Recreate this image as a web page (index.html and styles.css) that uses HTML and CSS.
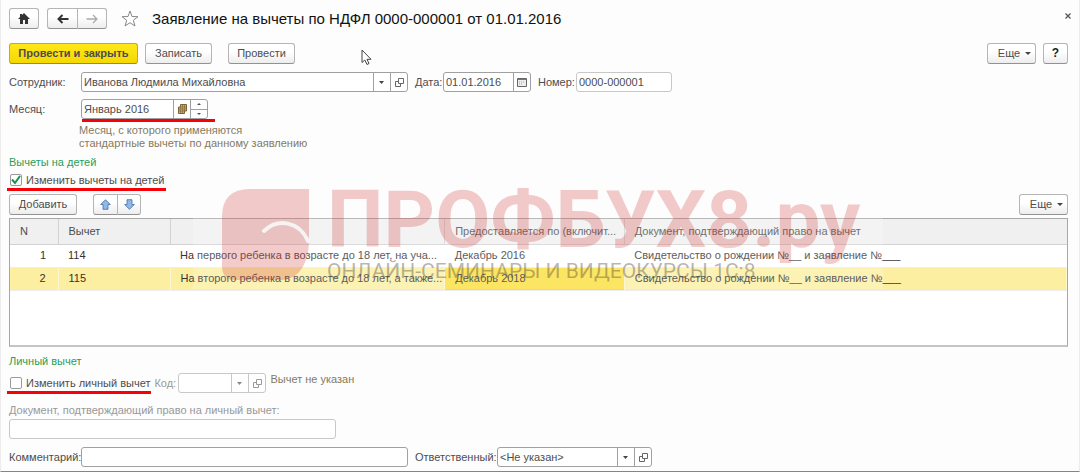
FILE: index.html
```html
<!DOCTYPE html>
<html lang="ru">
<head>
  <meta charset="UTF-8">
  <meta name="viewport" content="width=device-width, initial-scale=1.0">
  <title>Заявление на вычеты по НДФЛ</title>
  <link rel="stylesheet" href="styles.css">
</head>
<body>
  <main class="page">
    <!-- Заголовок окна -->
    <header class="header">
      <button class="btn btn-home" type="button" aria-label="Домой">
        <svg width="12" height="11" viewBox="0 0 12 11"><path d="M6 0 12 6H10V11H7V7H5V11H2V6H0L2 4V1H4V2Z" fill="#333"/></svg>
      </button>
      <div class="btn-group nav">
        <button class="btn" type="button" aria-label="Назад">
          <svg width="12" height="10" viewBox="0 0 12 10"><path d="M11.500 5H2M5.500 1 1.500 5 5.500 9" fill="none" stroke="#333" stroke-width="2"/></svg>
        </button>
        <button class="btn" type="button" aria-label="Вперед">
          <svg width="12" height="10" viewBox="0 0 12 10"><path d="M.5 5H10M7 1 11 5 7 9" fill="none" stroke="#aaa" stroke-width="1.300"/></svg>
        </button>
      </div>
      <button class="plain star" type="button" aria-label="В избранное">
        <svg width="18" height="17" viewBox="0 0 18 17"><path d="M9 1 11 6.500 17 6.700 12.300 10.300 14 16 9 12.700 4 16 5.700 10.300 1 6.700 7 6.500Z" fill="#fff" stroke="#888"/></svg>
      </button>
      <h1 class="title">Заявление на вычеты по НДФЛ 0000-000001 от 01.01.2016</h1>
      <button class="plain close" type="button" aria-label="Закрыть">
        <svg width="6" height="6" viewBox="0 0 6 6"><path d="M.5 .5 5.500 5.500M5.500 .5 .5 5.500" stroke="#555" stroke-width="1.300"/></svg>
      </button>
    </header>

    <div class="commands">
      <button class="btn btn-main" type="button">Провести и закрыть</button>
      <button class="btn btn-save" type="button">Записать</button>
      <button class="btn btn-post" type="button">Провести</button>
      <button class="btn btn-more" type="button">Еще <span class="caret"></span></button>
      <button class="btn btn-help" type="button">?</button>
    </div>

    <!-- Реквизиты документа -->
    <div class="row row-employee">
      <label class="label" for="employee">Сотрудник:</label>
      <div class="field field-wide">
        <select id="employee"><option>Иванова Людмила Михайловна</option></select>
        <button class="field-btn" type="button" aria-label="Открыть сотрудника">
          <svg width="9" height="9" viewBox="0 0 9 9"><path d="M3.500 .5H8.500V5.500H3.500ZM3 3.500H.5V8.500H5.500V6" fill="none" stroke="#666"/></svg>
        </button>
      </div>
      <label class="label-date" for="date">Дата:</label>
      <div class="field field-date">
        <input id="date" type="text" value="01.01.2016">
        <button class="field-btn" type="button" aria-label="Календарь">
          <svg width="10" height="9" viewBox="0 0 10 9"><path d="M.5 .5H9.500V8.500H.5Z" fill="#eee" stroke="#666"/><path d="M1 1.500H9" stroke="#777"/><path d="M2 4H8M2 6H6" stroke="#aaa" stroke-dasharray="1 1"/></svg>
        </button>
      </div>
      <label class="label-number" for="number">Номер:</label>
      <div class="field field-number field-light">
        <input id="number" type="text" value="0000-000001" readonly>
      </div>
    </div>

    <div class="row row-month">
      <label class="label" for="month">Месяц:</label>
      <div class="field field-month marked">
        <input id="month" type="text" value="Январь 2016">
        <button class="field-btn" type="button" aria-label="Выбрать месяц">
          <svg width="9" height="10" viewBox="0 0 9 10"><path d="M2.500 .5H8.500V7H6.500V9.500H.5V3H2.500Z" fill="#c9ad78" stroke="#7d6434"/><path d="M2.500 3V9M4.500 1V9M6.500 1V7M1 5H8M1 7H7M3 3H8" stroke="#7d6434" stroke-width=".6"/></svg>
        </button>
        <div class="spin">
          <button type="button" aria-label="Следующий месяц"><span class="tick tick-up"></span></button>
          <button type="button" aria-label="Предыдущий месяц"><span class="tick"></span></button>
        </div>
      </div>
    </div>
    <p class="hint">Месяц, с которого применяются<br>стандартные вычеты по данному заявлению</p>

    <!-- Вычеты на детей -->
    <h2 class="group-title">Вычеты на детей</h2>
    <div class="row-check">
      <label class="check marked">
        <input type="checkbox" checked>
        <span>Изменить вычеты на детей</span>
      </label>
    </div>

    <div class="toolbar">
      <button class="btn btn-add" type="button">Добавить</button>
      <div class="btn-group move">
        <button class="btn" type="button" aria-label="Переместить вверх">
          <svg width="11" height="11" viewBox="0 0 11 11"><path d="M5.500 .7 10.300 5.500H8V10.300H3V5.500H.7Z" fill="#8fb8e6" stroke="#3f6fa8" stroke-width=".8"/></svg>
        </button>
        <button class="btn" type="button" aria-label="Переместить вниз">
          <svg width="11" height="11" viewBox="0 0 11 11"><path d="M5.500 10.300 10.300 5.500H8V.7H3V5.500H.7Z" fill="#8fb8e6" stroke="#3f6fa8" stroke-width=".8"/></svg>
        </button>
      </div>
      <button class="btn btn-more" type="button">Еще <span class="caret"></span></button>
    </div>

    <div class="table-box">
      <table class="table">
        <colgroup>
          <col class="col-n">
          <col class="col-code">
          <col class="col-name">
          <col class="col-until">
          <col>
        </colgroup>
        <thead>
          <tr>
            <th>N</th>
            <th>Вычет</th>
            <th></th>
            <th>Предоставляется по (включит...</th>
            <th>Документ, подтверждающий право на вычет</th>
          </tr>
        </thead>
        <tbody>
          <tr>
            <td class="num">1</td>
            <td>114</td>
            <td>На первого ребенка в возрасте до 18 лет, на уча...</td>
            <td>Декабрь 2016</td>
            <td>Свидетельство о рождении №__ и заявление №___</td>
          </tr>
          <tr class="selected">
            <td class="num">2</td>
            <td>115</td>
            <td>На второго ребенка в возрасте до 18 лет, а также...</td>
            <td class="current">Декабрь 2018</td>
            <td>Свидетельство о рождении №__ и заявление №___</td>
          </tr>
        </tbody>
      </table>
    </div>

    <!-- Личный вычет -->
    <h2 class="group-title">Личный вычет</h2>
    <div class="row row-personal">
      <label class="check marked">
        <input type="checkbox">
        <span>Изменить личный вычет</span>
      </label>
      <label class="muted" for="code">Код:</label>
      <div class="field field-code field-light">
        <select id="code" disabled><option></option></select>
        <button class="field-btn" type="button" aria-label="Открыть вычет" disabled>
          <svg width="9" height="9" viewBox="0 0 9 9"><path d="M3.500 .5H8.500V5.500H3.500ZM3 3.500H.5V8.500H5.500V6" fill="none" stroke="#999"/></svg>
        </button>
      </div>
      <span class="note">Вычет не указан</span>
    </div>
    <label class="muted doc-label" for="document">Документ, подтверждающий право на личный вычет:</label>
    <div class="field field-wide field-light">
      <input id="document" type="text" disabled>
    </div>

    <div class="row row-comment">
      <label class="label" for="comment">Комментарий:</label>
      <div class="field field-wide">
        <input id="comment" type="text">
      </div>
      <label class="label-responsible" for="responsible">Ответственный:</label>
      <div class="field field-responsible">
        <select id="responsible"><option>&lt;Не указан&gt;</option></select>
        <button class="field-btn" type="button" aria-label="Открыть ответственного">
          <svg width="9" height="9" viewBox="0 0 9 9"><path d="M3.500 .5H8.500V5.500H3.500ZM3 3.500H.5V8.500H5.500V6" fill="none" stroke="#666"/></svg>
        </button>
      </div>
    </div>

    <!-- Водяной знак -->
    <div class="watermark">
      <svg class="watermark-logo" width="87" height="91" viewBox="0 0 87 91">
        <path d="M28 0H87V50C87 76 76 91 58 91H14Q0 91 0 77V28Q0 0 28 0Z" fill="#c81414" fill-opacity=".22"/>
        <path d="M42 42C56 29 77 32 86 52" fill="none" stroke="#f5f3f3" stroke-width="4" stroke-linecap="round"/>
      </svg>
      <div class="watermark-name">ПРОФБУХ8.ру</div>
      <div class="watermark-text">ОНЛАЙН-СЕМИНАРЫ И ВИДЕОКУРСЫ 1С:8</div>
    </div>

    <svg class="pointer" width="11" height="17" viewBox="0 0 11 17"><path d="M1 1V13.500L3.800 11 6 15.500 8 14.500 6 10.300H10Z" fill="#fff" stroke="#444"/></svg>
  </main>
</body>
</html>
```
FILE: styles.css
```css
* {
  box-sizing: border-box;
}

body {
  margin: 0;
  background-color: #fdfdfd;
  color: #4d4d4d;
  font-family: "Liberation Sans", Arial, sans-serif;
  font-size: 11px;
  line-height: 13px;
}

button,
input,
select {
  margin: 0;
  color: inherit;
  font: inherit;
}

svg {
  display: block;
}

.page {
  position: relative;
  display: flex;
  flex-direction: column;
  min-height: 100vh;
  padding: 8px 11px 4px 8px;
  border: 1px solid #ececec;
  border-top: 0;
  border-bottom-color: #858585;
}

/* Кнопки */
.btn {
  display: flex;
  align-items: center;
  justify-content: center;
  height: 21px;
  padding: 0;
  border: 1px solid #b5b5b5;
  border-bottom-color: #929292;
  border-radius: 3px;
  background: linear-gradient(#fff 40%, #ededed);
}

.btn-group {
  display: flex;
}

.btn-group .btn:first-child {
  border-right: 0;
  border-radius: 3px 0 0 3px;
}

.btn-group .btn:last-child {
  border-radius: 0 3px 3px 0;
}

.plain {
  padding: 0;
  border: 0;
  background: none;
}

.caret {
  margin-left: 5px;
  border: 3px solid transparent;
  border-top-color: #444;
  border-bottom: 0;
}

/* Заголовок */
.header {
  display: flex;
  align-items: center;
}

.btn-home {
  width: 30px;
}

.nav {
  margin-left: 8px;
}

.nav .btn {
  width: 30px;
}

.star {
  margin-left: 14px;
}

.title {
  margin: 0 0 0 13px;
  color: #111;
  font-size: 15px;
  font-weight: normal;
  line-height: 20px;
}

.close {
  align-self: flex-start;
  margin: 5px -3px 0 auto;
}

.commands {
  display: flex;
  margin-top: 14px;
}

.btn-main {
  width: 129px;
  border-color: #c5ac12;
  border-bottom-color: #a08c14;
  background: linear-gradient(#ffe71a, #f5d800);
  font-weight: bold;
}

.btn-save {
  width: 67px;
  margin-left: 7px;
}

.btn-post {
  width: 67px;
  margin-left: 16px;
}

.btn-more {
  width: 49px;
  margin-left: auto;
  padding-left: 6px;
}

.btn-help {
  width: 25px;
  margin-left: 7px;
  color: #222;
  font-size: 12px;
  font-weight: bold;
}

/* Поля */
.row {
  display: flex;
  align-items: center;
}

.row-employee {
  margin-top: 8px;
}

.row-month {
  margin-top: 7px;
}

.label {
  width: 72px;
}

.label-date {
  width: 28px;
  margin-left: 7px;
}

.label-number {
  width: 38px;
  margin-left: 7px;
}

.label-responsible {
  width: 82px;
  margin-left: 7px;
}

.field {
  display: flex;
  height: 20px;
  border: 1px solid #a0a0a0;
  border-radius: 3px;
  background-color: #fff;
}

.field input,
.field select {
  flex: 1;
  min-width: 0;
  padding: 0 2px;
  border: 0;
  background-color: transparent;
}

.field select {
  appearance: none;
  background: url("data:image/svg+xml,%3Csvg xmlns='http://www.w3.org/2000/svg' width='17' height='18'%3E%3Cpath d='M.5 0V18' stroke='%23a0a0a0'/%3E%3Cpath d='M6 8H11L8.5 11Z' fill='%23444'/%3E%3C/svg%3E") no-repeat right center;
  opacity: 1;
}

.field-btn {
  display: flex;
  align-items: center;
  justify-content: center;
  width: 17px;
  padding: 0;
  border: 0;
  border-left: 1px solid #a0a0a0;
  background: none;
}

.field-light,
.field-light .field-btn {
  border-color: #c8c8c8;
}

.field-light select {
  background-image: url("data:image/svg+xml,%3Csvg xmlns='http://www.w3.org/2000/svg' width='17' height='18'%3E%3Cpath d='M.5 0V18' stroke='%23c8c8c8'/%3E%3Cpath d='M6 8H11L8.5 11Z' fill='%23888'/%3E%3C/svg%3E");
}

.field-wide {
  width: 327px;
}

.field-date {
  width: 88px;
}

.field-number {
  width: 96px;
}

.field-month {
  width: 127px;
}

.field-code {
  width: 88px;
}

.field-responsible {
  width: 155px;
}

.spin {
  display: flex;
  flex-direction: column;
  width: 17px;
  border-left: 1px solid #a0a0a0;
}

.spin button {
  display: flex;
  flex: 1;
  align-items: center;
  justify-content: center;
  padding: 0;
  border: 0;
  background: none;
}

.spin button + button {
  border-top: 1px solid #a0a0a0;
}

.tick {
  border: 2px solid transparent;
  border-top-color: #555;
  border-bottom: 0;
}

.tick-up {
  transform: rotate(180deg);
}

.hint {
  margin: 5px 0 0 70px;
  color: #857a60;
}

.group-title {
  margin: 6px 0 0;
  color: #2a9d55;
  font-size: 11px;
  font-weight: normal;
}

/* Красное подчеркивание */
.marked {
  position: relative;
}

.marked::after {
  content: "";
  position: absolute;
  right: -8px;
  bottom: -4px;
  left: 0;
  height: 3px;
  background-color: #f80008;
}

/* Флажки */
.row-check {
  display: flex;
  margin-top: 4px;
}

.check {
  display: flex;
  align-items: center;
  gap: 4px;
  height: 14px;
  padding-left: 1px;
}

.check.marked::after {
  right: -1px;
  left: -2px;
}

.check input {
  appearance: none;
  width: 12px;
  height: 12px;
  margin: 0;
  border: 1px solid #999;
  border-radius: 2px;
  background-color: #fff;
}

.check input:checked {
  background-image: url("data:image/svg+xml,%3Csvg xmlns='http://www.w3.org/2000/svg' width='10' height='10'%3E%3Cpath d='M1 4.500 4 8 9 1' fill='none' stroke='%23109648' stroke-width='2'/%3E%3C/svg%3E");
}

.toolbar {
  display: flex;
  margin-top: 7px;
}

.btn-add {
  width: 68px;
}

.move {
  margin-left: 16px;
}

.move .btn {
  width: 24px;
}

/* Таблица вычетов */
.table-box {
  flex: 1;
  margin-top: 3px;
  border: 1px solid #a8a8a8;
  border-bottom: 2px solid #c4c4c4;
  background-color: #fff;
}

.table {
  width: 100%;
  border-collapse: collapse;
  table-layout: fixed;
}

.col-n {
  width: 48px;
}

.col-code {
  width: 112px;
}

.col-name {
  width: 26%;
}

.col-until {
  width: 17%;
}

.table th,
.table td {
  height: 23px;
  padding: 0 0 0 10px;
  overflow: hidden;
  font-weight: normal;
  text-align: left;
  text-overflow: ellipsis;
  white-space: nowrap;
}

.table th {
  height: 25px;
  border-right: 1px solid #d2d2d2;
  border-bottom: 1px solid #d2d2d2;
  background-color: #f0f0f0;
}

.table th:last-child {
  border-right: 0;
}

.table td {
  border-bottom: 1px solid #ededed;
  color: #333;
}

.table .num {
  padding-right: 12px;
  text-align: right;
}

.table .selected td {
  border-right: 1px solid #fdf6cf;
  background-color: #fcefa1;
}

.table .selected .current {
  background-color: #fbdf3c;
}

/* Личный вычет */
.table-box + .group-title {
  margin-top: 8px;
}

.row-personal {
  margin-top: 5px;
}

.row-personal .muted {
  width: 24px;
  margin-left: 4px;
}

.muted {
  color: #999;
}

.note {
  align-self: flex-start;
  margin-left: 4px;
  color: #857a60;
}

.doc-label {
  margin: 11px 0 2px;
}

.row-comment {
  margin-top: 8px;
}

/* Водяной знак поверх формы */
.watermark {
  position: absolute;
  top: 181px;
  left: 192px;
  display: grid;
  grid-template-rows: 66px 34px;
  grid-template-columns: auto 1fr;
  width: 690px;
  height: 108px;
  padding: 8px 0 0 29px;
  column-gap: 18px;
  background-color: rgba(255, 255, 255, 0.2);
  font-family: Roboto, sans-serif;
  pointer-events: none;
  white-space: nowrap;
}

.watermark-logo {
  grid-row: 1 / 3;
}

.watermark-name {
  color: rgba(200, 20, 20, 0.22);
  font-size: 80px;
  font-weight: bold;
  line-height: 62px;
}

.watermark-text {
  color: rgba(70, 60, 50, 0.38);
  font-size: 21px;
  line-height: 32px;
}

.pointer {
  position: absolute;
  top: 49px;
  left: 360px;
}
```
